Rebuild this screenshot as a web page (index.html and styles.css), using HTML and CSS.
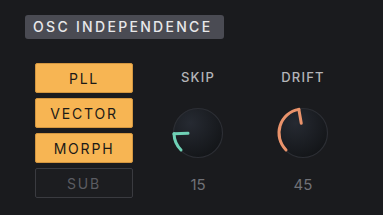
FILE: index.html
```html
<!DOCTYPE html>
<html lang="en">
<head>
    <meta charset="UTF-8">
    <title>OSC Independence</title>
    <link rel="stylesheet" href="styles.css">
</head>
<body>
<div class="panel">
    <div class="title">OSC INDEPENDENCE</div>

    <div class="row">
        <div class="modes">
            <button class="mode on">PLL</button>
            <button class="mode on">VECTOR</button>
            <button class="mode on">MORPH</button>
            <button class="mode">SUB</button>
        </div>

        <div class="knob-col">
            <div class="knob-label">SKIP</div>
            <svg class="knob" width="56" height="56" viewBox="0 0 56 56">
                <defs>
                    <radialGradient id="kb" cx="35%" cy="30%" r="75%">
                        <stop offset="0" stop-color="#262a32"/>
                        <stop offset="1" stop-color="#131518"/>
                    </radialGradient>
                </defs>
                <circle cx="28" cy="28" r="25" fill="url(#kb)"/>
                <circle cx="28" cy="28" r="24.5" fill="none" stroke="#2c2e34" stroke-width="1.2"/>
                <path d="M11.03 44.97 A24 24 0 0 1 4.01 28.84" fill="none" stroke="#6fd1b6" stroke-width="3" stroke-linecap="round"/>
                <path d="M4.01 28.84 L18 28.35" stroke="#6fd1b6" stroke-width="3" stroke-linecap="round"/>
            </svg>
            <div class="knob-value">15</div>
        </div>

        <div class="knob-col">
            <div class="knob-label">DRIFT</div>
            <svg class="knob" width="56" height="56" viewBox="0 0 56 56">
                <circle cx="28" cy="28" r="25" fill="url(#kb)"/>
                <circle cx="28" cy="28" r="24.5" fill="none" stroke="#2c2e34" stroke-width="1.2"/>
                <path d="M11.03 44.97 A24 24 0 0 1 23.83 4.36" fill="none" stroke="#ea936b" stroke-width="3" stroke-linecap="round"/>
                <path d="M23.83 4.36 L26.26 18.15" stroke="#ea936b" stroke-width="3" stroke-linecap="round"/>
            </svg>
            <div class="knob-value">45</div>
        </div>
    </div>
</div>
</body>
</html>
```

FILE: styles.css
```css
body {
    margin: 0;
    background: #1a1b1e;
    font-family: Inter, "Liberation Sans", sans-serif;
}

.panel {
    padding: 15px 0 0 25px;
}

.title {
    display: inline-block;
    box-sizing: border-box;
    width: 199px;
    height: 24px;
    line-height: 24px;
    padding-left: 8px;
    background: #4a4b53;
    border-radius: 3px;
    color: #e8e8ea;
    font-size: 14px;
    font-weight: 500;
    letter-spacing: 2.3px;
    white-space: nowrap;
}

.row {
    display: flex;
    margin-top: 24px;
    margin-left: 10px;
    gap: 25px;
}

.modes {
    display: flex;
    flex-direction: column;
    gap: 5px;
    width: 98px;
}

.mode {
    height: 30px;
    padding: 0;
    border-radius: 2px;
    border: 1px solid #3a3b40;
    background: #1c1d20;
    color: #5b5c62;
    font-family: Inter, "Liberation Sans", sans-serif;
    font-size: 14px;
    font-weight: 400;
    letter-spacing: 1.8px;
    cursor: pointer;
}

.mode.on {
    background: #f7b553;
    border-color: #d39640;
    color: #1c1a17;
}

.knob-col {
    width: 80px;
    display: flex;
    flex-direction: column;
    align-items: center;
    padding-top: 6px;
}

.knob-label {
    font-size: 13px;
    line-height: 16px;
    font-weight: 500;
    letter-spacing: 1.2px;
    color: #b4b5b9;
}

.knob {
    margin-top: 20px;
}

.knob-value {
    margin-top: 15px;
    font-size: 15px;
    line-height: 18px;
    color: #707177;
}
```
